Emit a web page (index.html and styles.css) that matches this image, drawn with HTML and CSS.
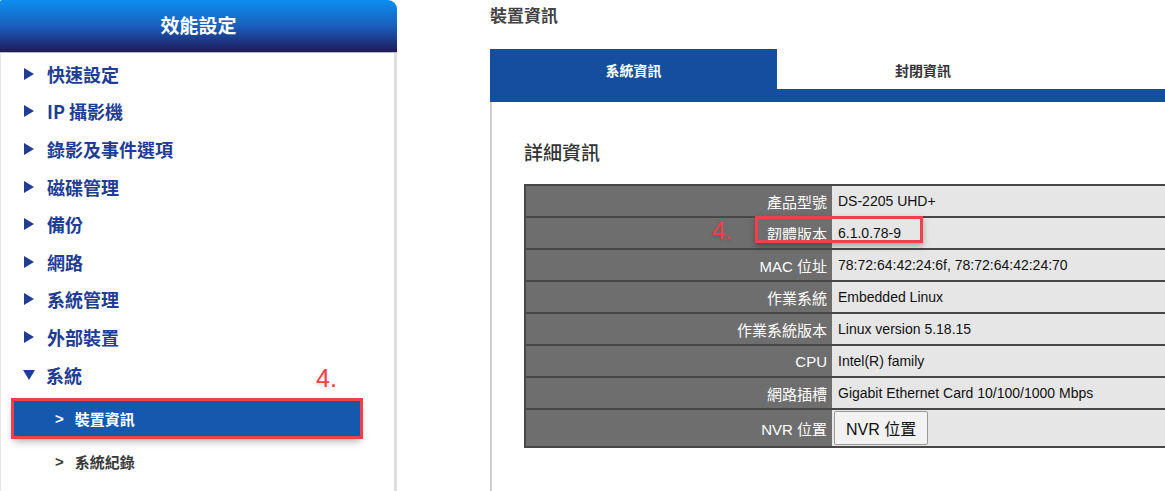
FILE: index.html
```html
<!DOCTYPE html>
<html lang="zh-Hant">
<head>
  <meta charset="UTF-8" />
  <title>裝置資訊</title>
  <link rel="stylesheet" href="styles.css">
</head>
<body>
  <div class="page">
    <div class="sidebar">
      <div class="side-head">效能設定</div>
      <div class="side-body">
        <div class="menu-item"><span class="tri"></span>快速設定</div>
        <div class="menu-item"><span class="tri"></span>IP 攝影機</div>
        <div class="menu-item"><span class="tri"></span>錄影及事件選項</div>
        <div class="menu-item"><span class="tri"></span>磁碟管理</div>
        <div class="menu-item"><span class="tri"></span>備份</div>
        <div class="menu-item"><span class="tri"></span>網路</div>
        <div class="menu-item"><span class="tri"></span>系統管理</div>
        <div class="menu-item"><span class="tri"></span>外部裝置</div>
        <div class="menu-item open"><span class="tri down"></span>系統</div>
        <div class="sub-item active"><span class="gt">&gt;</span>裝置資訊</div>
        <div class="sub-item"><span class="gt">&gt;</span>系統紀錄</div>
        <div class="mark mark-side">4.</div>
      </div>
    </div>

    <div class="main">
      <div class="main-title">裝置資訊</div>
      <div class="tabs">
        <div class="tab active">系統資訊</div>
        <div class="tab">封閉資訊</div>
      </div>
      <div class="tab-strip"></div>
      <div class="panel">
        <div class="panel-title">詳細資訊</div>
        <div class="table-wrap">
          <table class="info">
            <tr><th>產品型號</th><td>DS-2205 UHD+</td></tr>
            <tr><th>韌體版本</th><td>6.1.0.78-9</td></tr>
            <tr><th>MAC 位址</th><td>78:72:64:42:24:6f, 78:72:64:42:24:70</td></tr>
            <tr><th>作業系統</th><td>Embedded Linux</td></tr>
            <tr><th>作業系統版本</th><td>Linux version 5.18.15</td></tr>
            <tr><th>CPU</th><td>Intel(R) family</td></tr>
            <tr><th>網路插槽</th><td>Gigabit Ethernet Card 10/100/1000 Mbps</td></tr>
            <tr class="btn-row"><th>NVR 位置</th><td><button class="nvr-btn">NVR 位置</button></td></tr>
          </table>
          <div class="mark mark-table">4.</div>
          <div class="red-box"></div>
        </div>
      </div>
    </div>
  </div>
</body>
</html>
```

FILE: styles.css
```css
html, body { margin: 0; padding: 0; }
body {
  font-family: "Liberation Sans", Arial, "Noto Sans CJK TC", sans-serif;
  background: #fff;
  color: #333;
  overflow: hidden;
  width: 1165px;
  height: 491px;
}
.page { display: flex; height: 491px; }

/* sidebar */
.sidebar { width: 397px; flex: none; display: flex; flex-direction: column; margin-right: 93px; }
.side-head {
  height: 52px;
  line-height: 50px;
  text-align: center;
  color: #fff;
  font-family: "Noto Sans CJK TC", sans-serif;
  font-weight: bold;
  font-size: 19px;
  background: linear-gradient(#0b8fee, #1a5fbe 50%, #1f1a58);
  border-top-right-radius: 9px;
  border-top-left-radius: 2px;
  border-bottom: 1px solid #b9b9d2;
}
.side-body {
  position: relative;
  flex: 1;
  border-left: 1px solid #e6e6e6;
  border-right: 3px solid #dedede;
  padding-top: 2px;
}
.menu-item {
  display: flex;
  align-items: center;
  height: 37.6px;
  padding-left: 23px;
  font-family: "Noto Sans CJK TC", sans-serif;
  font-weight: bold;
  font-size: 18px;
  color: #213d92;
}
.tri {
  width: 0; height: 0;
  border-top: 6px solid transparent;
  border-bottom: 6px solid transparent;
  border-left: 10px solid #213d92;
  margin-right: 13px;
}
.tri.down {
  border-left: 6px solid transparent;
  border-right: 6px solid transparent;
  border-top: 10px solid #213d92;
  border-bottom: 0;
  margin-right: 11px;
  margin-left: -1px;
}
.sub-item {
  display: flex;
  align-items: center;
  height: 35px;
  padding-left: 54px;
  font-family: "Noto Sans CJK TC", sans-serif;
  font-weight: bold;
  font-size: 15px;
  color: #3a3a3a;
}
.sub-item .gt { margin-right: 11px; font-family: "Liberation Sans", sans-serif; }
.sub-item.active {
  margin: 8px 34px 8px 13px;
  padding-left: 41px;
  background: #1459ad;
  color: #fff;
  outline: 3px solid #f1404a;
  box-shadow: 0 5px 8px rgba(0,0,0,0.35);
}
.mark {
  position: absolute;
  color: #f1404a;
  font-size: 25px;
  font-family: "Liberation Sans", sans-serif;
  text-shadow: 0 2px 3px rgba(0,0,0,0.15);
}
.mark-side { left: 315px; top: 311px; }

/* main */
.main { flex: none; width: 760px; }
.main-title {
  font-family: "Noto Sans CJK TC", sans-serif;
  font-weight: bold;
  font-size: 17px;
  color: #444;
  height: 49px;
  line-height: 30px;
}
.tabs { display: flex; height: 40px; }
.tab {
  width: 292px;
  text-align: center;
  line-height: 42px;
  font-family: "Noto Sans CJK TC", sans-serif;
  font-weight: bold;
  font-size: 14px;
  color: #333;
}
.tab.active { width: 287px; background: #144e9c; color: #fff; }
.tab-strip { height: 13px; background: #144e9c; }
.panel {
  border-left: 2px solid #cfcfcf;
  height: 400px;
  padding-left: 32px;
}
.panel-title {
  font-family: "Noto Sans CJK TC", sans-serif;
  font-weight: 500;
  font-size: 19px;
  color: #333;
  padding-top: 36px;
  height: 46px;
}
.table-wrap { position: relative; }
.info {
  border-collapse: collapse;
  width: 700px;
  font-size: 14px;
  border: 2px solid #474747;
}
.info tr { height: 32px; border-bottom: 2px solid #474747; }
.info th {
  width: 301px;
  background: #6e6e6e;
  color: #fff;
  font-weight: normal;
  font-size: 15px;
  text-align: right;
  padding: 0 5px 0 0;
}
.info td { background: #e6e6e6; color: #111; padding: 0 6px; }
.info .btn-row { height: 38px; }
.nvr-btn {
  font-family: "Liberation Sans", "Noto Sans CJK TC", sans-serif;
  font-size: 16px;
  color: #111;
  background: #f2f2f2;
  border: 1px solid #9a9a9a;
  border-radius: 2px;
  padding: 4px 11px;
  margin-left: -4px;
}
.mark-table { left: 188px; top: 33px; font-size: 24px; }
.red-box {
  position: absolute;
  left: 231px;
  top: 32px;
  width: 162px;
  height: 21px;
  border: 3px solid #f1404a;
  box-shadow: 0 3px 6px rgba(0,0,0,0.3);
}
```
